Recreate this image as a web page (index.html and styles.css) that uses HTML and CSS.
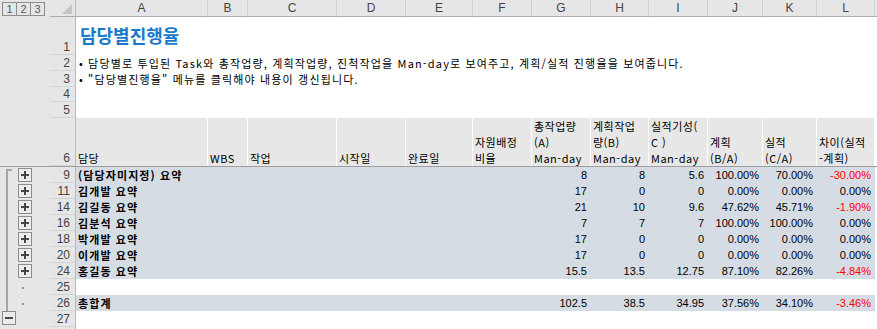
FILE: index.html
```html
<!DOCTYPE html>
<html lang="ko">
<head>
<meta charset="utf-8">
<title>담당별진행율</title>
<link rel="stylesheet" href="styles.css">
</head>
<body>
<div class="sheet">
  <div class="row hdr">
    <div class="ol levels"><span class="lv">1</span><span class="lv">2</span><span class="lv">3</span></div>
    <div class="rh corner"><svg width="10" height="10" viewBox="0 0 10 10"><polygon points="10,0 10,10 0,10" fill="#c4c4c4"/></svg></div>
    <div class="ch">A</div><div class="ch">B</div><div class="ch">C</div><div class="ch">D</div><div class="ch">E</div><div class="ch">F</div><div class="ch">G</div><div class="ch">H</div><div class="ch">I</div><div class="ch">J</div><div class="ch">K</div><div class="ch">L</div><div class="ch rest"></div>
  </div>

  <div class="row h38">
    <div class="ol"></div><div class="rh">1</div>
    <div class="c span title">담당별진행율</div>
  </div>
  <div class="row">
    <div class="ol"></div><div class="rh">2</div>
    <div class="c span desc">• 담당별로 투입된 Task와 총작업량, 계획작업량, 진척작업을 Man-day로 보여주고, 계획/실적 진행율을 보여줍니다.</div>
  </div>
  <div class="row">
    <div class="ol"></div><div class="rh">3</div>
    <div class="c span desc">• "담당별진행율" 메뉴를 클릭해야 내용이 갱신됩니다.</div>
  </div>
  <div class="row h15">
    <div class="ol"></div><div class="rh">4</div><div class="c span"></div>
  </div>
  <div class="row">
    <div class="ol"></div><div class="rh">5</div><div class="c span"></div>
  </div>

  <div class="row h49 freeze">
    <div class="ol"></div><div class="rh">6</div>
    <div class="th">담당</div>
    <div class="th">WBS</div>
    <div class="th">작업</div>
    <div class="th">시작일</div>
    <div class="th">완료일</div>
    <div class="th">자원배정<br>비율</div>
    <div class="th">총작업량<br>(A)<br>Man-day</div>
    <div class="th">계획작업<br>량(B)<br>Man-day</div>
    <div class="th">실적기성(<br>C )<br>Man-day</div>
    <div class="th">계획<br>(B/A)</div>
    <div class="th">실적<br>(C/A)</div>
    <div class="th">차이(실적<br>-계획)</div>
    <div class="blank"></div>
  </div>

  <div class="row data">
    <div class="ol"><span class="lane"><i class="vline top"></i></span><span class="lane"><b class="btn"><svg width="12" height="12" viewBox="0 0 12 12"><path d="M2 5h8v2H2zM5 2h2v8H5z"/></svg></b></span></div>
    <div class="rh">9</div>
    <div class="c lbl">(담당자미지정) 요약</div><div class="c"></div><div class="c"></div><div class="c"></div><div class="c"></div><div class="c"></div>
    <div class="c n">8</div><div class="c n">8</div><div class="c n">5.6</div><div class="c n">100.00%</div><div class="c n">70.00%</div><div class="c n neg">-30.00%</div>
    <div class="blank"></div>
  </div>
  <div class="row data">
    <div class="ol"><span class="lane"><i class="vline"></i></span><span class="lane"><b class="btn"><svg width="12" height="12" viewBox="0 0 12 12"><path d="M2 5h8v2H2zM5 2h2v8H5z"/></svg></b></span></div>
    <div class="rh">11</div>
    <div class="c lbl">김개발 요약</div><div class="c"></div><div class="c"></div><div class="c"></div><div class="c"></div><div class="c"></div>
    <div class="c n">17</div><div class="c n">0</div><div class="c n">0</div><div class="c n">0.00%</div><div class="c n">0.00%</div><div class="c n">0.00%</div>
    <div class="blank"></div>
  </div>
  <div class="row data">
    <div class="ol"><span class="lane"><i class="vline"></i></span><span class="lane"><b class="btn"><svg width="12" height="12" viewBox="0 0 12 12"><path d="M2 5h8v2H2zM5 2h2v8H5z"/></svg></b></span></div>
    <div class="rh">14</div>
    <div class="c lbl">김길동 요약</div><div class="c"></div><div class="c"></div><div class="c"></div><div class="c"></div><div class="c"></div>
    <div class="c n">21</div><div class="c n">10</div><div class="c n">9.6</div><div class="c n">47.62%</div><div class="c n">45.71%</div><div class="c n neg">-1.90%</div>
    <div class="blank"></div>
  </div>
  <div class="row data">
    <div class="ol"><span class="lane"><i class="vline"></i></span><span class="lane"><b class="btn"><svg width="12" height="12" viewBox="0 0 12 12"><path d="M2 5h8v2H2zM5 2h2v8H5z"/></svg></b></span></div>
    <div class="rh">16</div>
    <div class="c lbl">김분석 요약</div><div class="c"></div><div class="c"></div><div class="c"></div><div class="c"></div><div class="c"></div>
    <div class="c n">7</div><div class="c n">7</div><div class="c n">7</div><div class="c n">100.00%</div><div class="c n">100.00%</div><div class="c n">0.00%</div>
    <div class="blank"></div>
  </div>
  <div class="row data">
    <div class="ol"><span class="lane"><i class="vline"></i></span><span class="lane"><b class="btn"><svg width="12" height="12" viewBox="0 0 12 12"><path d="M2 5h8v2H2zM5 2h2v8H5z"/></svg></b></span></div>
    <div class="rh">18</div>
    <div class="c lbl">박개발 요약</div><div class="c"></div><div class="c"></div><div class="c"></div><div class="c"></div><div class="c"></div>
    <div class="c n">17</div><div class="c n">0</div><div class="c n">0</div><div class="c n">0.00%</div><div class="c n">0.00%</div><div class="c n">0.00%</div>
    <div class="blank"></div>
  </div>
  <div class="row data">
    <div class="ol"><span class="lane"><i class="vline"></i></span><span class="lane"><b class="btn"><svg width="12" height="12" viewBox="0 0 12 12"><path d="M2 5h8v2H2zM5 2h2v8H5z"/></svg></b></span></div>
    <div class="rh">20</div>
    <div class="c lbl">이개발 요약</div><div class="c"></div><div class="c"></div><div class="c"></div><div class="c"></div><div class="c"></div>
    <div class="c n">17</div><div class="c n">0</div><div class="c n">0</div><div class="c n">0.00%</div><div class="c n">0.00%</div><div class="c n">0.00%</div>
    <div class="blank"></div>
  </div>
  <div class="row data">
    <div class="ol"><span class="lane"><i class="vline"></i></span><span class="lane"><b class="btn"><svg width="12" height="12" viewBox="0 0 12 12"><path d="M2 5h8v2H2zM5 2h2v8H5z"/></svg></b></span></div>
    <div class="rh">24</div>
    <div class="c lbl">홍길동 요약</div><div class="c"></div><div class="c"></div><div class="c"></div><div class="c"></div><div class="c"></div>
    <div class="c n">15.5</div><div class="c n">13.5</div><div class="c n">12.75</div><div class="c n">87.10%</div><div class="c n">82.26%</div><div class="c n neg">-4.84%</div>
    <div class="blank"></div>
  </div>
  <div class="row">
    <div class="ol"><span class="lane"><i class="vline"></i></span><span class="lane"><i class="dot"></i></span></div>
    <div class="rh">25</div><div class="c span"></div>
  </div>
  <div class="row data">
    <div class="ol"><span class="lane"><i class="vline"></i></span><span class="lane"><i class="dot"></i></span></div>
    <div class="rh">26</div>
    <div class="c lbl">총합계</div><div class="c"></div><div class="c"></div><div class="c"></div><div class="c"></div><div class="c"></div>
    <div class="c n">102.5</div><div class="c n">38.5</div><div class="c n">34.95</div><div class="c n">37.56%</div><div class="c n">34.10%</div><div class="c n neg">-3.46%</div>
    <div class="blank"></div>
  </div>
  <div class="row">
    <div class="ol"><span class="lane"><b class="btn minus"><svg width="12" height="12" viewBox="0 0 12 12"><path d="M2 5h8v2H2z"/></svg></b></span></div>
    <div class="rh">27</div><div class="c span"></div>
  </div>
  <div class="row">
    <div class="ol"></div><div class="rh"></div><div class="c span"></div>
  </div>
</div>
</body>
</html>
```

FILE: styles.css
```css
html, body {
  margin: 0;
  padding: 0;
  background: #ffffff;
}
body {
  width: 877px;
  height: 329px;
  overflow: hidden;
  font-family: "Noto Sans CJK KR", "Noto Sans", sans-serif;
  color: #000;
}
.sheet {
  display: flex;
  flex-direction: column;
}
.row {
  display: grid;
  grid-template-columns: 50px 26px 132px 40px 89px 69px 67px 59px 59px 58px 59px 55px 54px 58px 1fr;
  height: 16px;
  box-sizing: border-box;
}
.row.hdr { height: 17px; }
.row.h38 { height: 38px; }
.row.h15 { height: 15px; }
.row.h49 { height: 49px; }
.row.freeze { border-bottom: 1px solid #9e9e9e; }

/* outline area */
.ol {
  background: #e6e6e6;
  display: flex;
  align-items: stretch;
}
.levels {
  align-items: flex-start;
  padding: 2px 0 0 2px;
}
.lv {
  width: 15px;
  height: 14px;
  box-sizing: border-box;
  border: 1px solid #8c8c8c;
  font-family: "Liberation Sans", Arial, sans-serif;
  font-size: 11px;
  line-height: 12px;
  color: #585858;
  text-align: center;
}
.lv + .lv { margin-left: -1px; }
.lane {
  width: 16px;
  display: flex;
  align-items: stretch;
}
.vline {
  margin-left: 6px;
  width: 2px;
  background: #a6a6a6;
}
.vline.top {
  margin-top: 2px;
  width: 4px;
  background: none;
  border-left: 2px solid #a6a6a6;
  border-top: 2px solid #a6a6a6;
}
.btn {
  width: 14px;
  height: 14px;
  box-sizing: border-box;
  margin: 1px 0 0 2px;
  border: 1px solid #8c8c8c;
  background: #ececec;
  display: flex;
}
.btn svg { fill: #474747; }
.btn.minus { margin: 0 0 0 2px; }
.dot {
  width: 2px;
  height: 2px;
  margin: 8px 0 0 6px;
  background: #9a9a9a;
  align-self: flex-start;
}

/* row headers */
.rh {
  background: #e6e6e6;
  border-right: 1px solid #b9b9b9;
  border-bottom: 1px solid #d4d4d4;
  box-sizing: border-box;
  display: flex;
  align-items: flex-end;
  justify-content: flex-end;
  padding-right: 5px;
  font-family: "Liberation Sans", Arial, sans-serif;
  font-size: 12px;
  line-height: 14px;
  color: #444;
  overflow: hidden;
}
.rh.corner {
  border-bottom: 1px solid #ababab;
  padding: 0 3px 2px 0;
}

/* column headers */
.ch {
  background: #e6e6e6;
  border-right: 1px solid #d0d0d0;
  border-bottom: 1px solid #ababab;
  box-sizing: border-box;
  text-align: center;
  font-family: "Liberation Sans", Arial, sans-serif;
  font-size: 12px;
  line-height: 16px;
  color: #444;
}
.ch.rest { border-right: none; }

/* cells */
.c {
  display: flex;
  align-items: flex-end;
  padding: 0 2px;
  white-space: nowrap;
  font-size: 11px;
  line-height: 16px;
  overflow: visible;
  min-width: 0;
}
.span { grid-column: 3 / 16; }
.title {
  color: #1a78cc;
  font-weight: 700;
  font-size: 18px;
  line-height: 24px;
  padding: 0 0 8px 4px;
}
.desc {
  padding-left: 3px;
  font-size: 11px;
  letter-spacing: 1.15px;
  line-height: 16px;
}
.th {
  background: #e8e7e7;
  border-right: 1px solid #ffffff;
  box-sizing: border-box;
  display: flex;
  align-items: flex-end;
  padding: 0 2px;
  font-size: 11px;
  letter-spacing: 0.5px;
  line-height: 16px;
  white-space: nowrap;
  overflow: hidden;
}
.blank { background: #ffffff; }
.data .c { background: #d6dce4; }
.lbl {
  font-weight: 700;
  font-size: 11px;
  letter-spacing: 1.1px;
  padding-left: 2px;
}
.n {
  justify-content: flex-end;
  padding-right: 4px;
  font-family: "Liberation Sans", Arial, sans-serif;
  font-size: 11px;
  letter-spacing: 0;
  line-height: 15px;
}
.neg { color: #ff0000; }
```
